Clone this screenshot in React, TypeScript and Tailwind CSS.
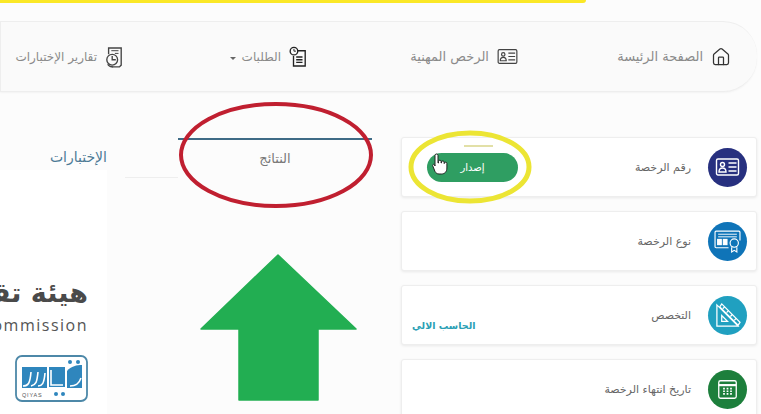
import { House } from 'lucide-react'
import type { ReactNode } from 'react'

function LicenseIcon({ className }: { className?: string }) {
  return (
    <svg viewBox="0 0 24 20" fill="none" stroke="currentColor" strokeWidth="1.4" className={className}>
      <rect x="1" y="2" width="22" height="16" rx="1.5" />
      <circle cx="7" cy="7.5" r="2" />
      <path d="M3.5 15c0-3 1.500-4 3.500-4s3.500 1 3.500 4z" />
      <path d="M13 6h8M13 10h8M13 14h8" />
    </svg>
  )
}

function CertificateIcon({ className }: { className?: string }) {
  return (
    <svg viewBox="0 0 26 22" fill="none" stroke="currentColor" strokeWidth="1.1" className={className}>
      <path d="M14 17H2a1 1 0 0 1-1-1V2a1 1 0 0 1 1-1h22a1 1 0 0 1 1 1v8" />
      <path d="M4 4h18M4 6.500h18" strokeWidth="0.9" />
      <rect x="3.500" y="9" width="3.500" height="5" fill="currentColor" />
      <rect x="9" y="9" width="3.500" height="5" fill="currentColor" />
      <circle cx="19.500" cy="12.500" r="4" />
      <path d="M17 16.500V21l2.500-1.500L22 21v-4.500" />
    </svg>
  )
}

function RulerIcon({ className }: { className?: string }) {
  return (
    <svg viewBox="0 0 28 28" fill="none" stroke="currentColor" strokeWidth="1.3" className={className}>
      <path d="M3 3v22h22z" />
      <path d="M8 14v6h6z" />
      <path d="M8 2l19 19-2 3L6 5z" />
      <path d="M11 5l-2 2M15 9l-2 2M19 13l-2 2M23 17l-2 2" />
    </svg>
  )
}

function CalendarIcon({ className }: { className?: string }) {
  return (
    <svg viewBox="0 0 24 24" fill="none" stroke="currentColor" strokeWidth="1.5" className={className}>
      <rect x="2" y="2" width="20" height="20" rx="2" />
      <path d="M2 7h20" strokeWidth="2.500" />
      <path d="M7 11h2M11 11h2M15 11h2M7 14h2M11 14h2M15 14h2M7 17h2M11 17h2M15 17h2" strokeWidth="1.800" />
    </svg>
  )
}

function OrdersIcon() {
  return (
    <svg viewBox="0 0 20 24" fill="none" stroke="#222" strokeWidth="1.500" className="h-[22px] w-[18px] shrink-0">
      <path d="M8 5h10v17H5V11" />
      <circle cx="5.500" cy="5.500" r="4.200" fill="#fafafa" />
      <path d="M5.500 3v2.500h2.200" strokeWidth="1.100" />
      <path d="M8 12h7M8 15h7M8 18h7" />
    </svg>
  )
}

function ReportIcon() {
  return (
    <svg viewBox="0 0 20 24" fill="none" stroke="#444" strokeWidth="1.500" className="h-[22px] w-[18px] shrink-0">
      <path d="M4 9V2h14v19l-2 2H8" />
      <path d="M7 5h8M11 8h4" strokeWidth="1.100" />
      <circle cx="8" cy="15" r="6" />
      <path d="M8 11v4h4" />
      <path d="M3 20c1 2 3 3 6 3" />
    </svg>
  )
}

function HandCursor({ className }: { className?: string }) {
  return (
    <svg viewBox="0 0 16 22" fill="#fff" stroke="#222" strokeWidth="1" strokeLinejoin="round" className={className}>
      <path d="M3 2.500a1.500 1.500 0 0 1 3 0V10h.5V8.500a1.300 1.300 0 0 1 2.600 0V10h.4V9.200a1.300 1.300 0 0 1 2.600 0v1.300h.2a1.300 1.300 0 0 1 2.600 0V15c0 3.500-2 6-5.500 6H7c-2 0-3-1-4-2.500L.8 13c-.6-1.200.8-2.300 1.600-1.300L3 13z" />
    </svg>
  )
}

function QiyasLogo() {
  return (
    <svg viewBox="0 0 73 47" className="h-[47px] w-[73px]">
      <rect x="1" y="1" width="71" height="45" rx="6" fill="#fff" stroke="#4d88a8" strokeWidth="1.800" />
      <rect x="7" y="12" width="25" height="21" fill="#2f86bd" />
      <rect x="34" y="12" width="16" height="20" fill="#2f86bd" />
      <path d="M52 16c4-5 10-6 15-6v23H52z" fill="#2f86bd" />
      <path d="M8 31c5 0 7-2 8-14M16 31c5-1 6-4 7-14M23 31c4 0 6-2 7-13M36 15l0 15h12M55 31c6 0 9-2 11-8" fill="none" stroke="#fff" strokeWidth="1.600" />
      <circle cx="55" cy="7" r="2" fill="#2f86bd" />
      <circle cx="63" cy="7" r="2" fill="#2f86bd" />
      <circle cx="41" cy="39" r="2" fill="#2f86bd" />
      <circle cx="48" cy="39" r="2" fill="#2f86bd" />
      <text x="7" y="41.500" fontSize="5.500" letterSpacing="0.800" fill="#555" fontFamily="Liberation Sans, sans-serif">QIYAS</text>
    </svg>
  )
}

function NavItem({ icon, label, caret, className, labelClass }: { icon: ReactNode; label: string; caret?: boolean; className: string; labelClass: string }) {
  return (
    <div className={`flex items-center gap-[8px] ${className}`}>
      {icon}
      <span className={`whitespace-nowrap text-[#8a8a8a] ${labelClass}`}>{label}</span>
      {caret && <span className="mt-[3px] -mr-[2px] border-x-[3px] border-t-[3px] border-x-transparent border-t-[#666]" />}
    </div>
  )
}

function InfoCard({ bg, icon, label, children }: { bg: string; icon: ReactNode; label: string; children?: ReactNode }) {
  return (
    <div className="flex h-[60px] shrink-0 items-center rounded-[3px] border border-[#eeeeee] bg-white pr-[9px] pl-[10px] shadow-[0_1px_3px_rgba(0,0,0,0.08)]">
      <div className={`flex h-[39px] w-[39px] shrink-0 items-center justify-center rounded-full text-white ${bg}`}>{icon}</div>
      <span className="mt-[2px] mr-[17px] text-[11px] text-[#666]">{label}</span>
      {children}
    </div>
  )
}

export default function App() {
  return (
    <div dir="ltr" className="relative h-[414px] w-[761px] overflow-hidden bg-[#fcfcfc] [font-family:'DejaVu_Sans',sans-serif]">
      <div className="h-[3px] w-[586px] rounded-br-[8px] bg-[#fbe827]" />

      <nav dir="rtl" className="mt-[18px] flex h-[71px] w-[757px] items-center rounded-r-[34px] border-y border-l border-[#eeeeee] bg-[#fafafa] pr-[26px] shadow-[0_1px_2px_rgba(0,0,0,0.04)]">
        <NavItem className="ml-[101px] w-[112px]" icon={<House className="h-[20px] w-[20px] shrink-0 text-[#333]" strokeWidth={1.500} />} label="الصفحة الرئيسة" labelClass="text-[13px]" />
        <NavItem className="ml-[102px] w-[109px]" icon={<LicenseIcon className="h-[17px] w-[21px] shrink-0 text-[#444]" />} label="الرخص المهنية" labelClass="text-[13px]" />
        <NavItem className="ml-[105px] w-[79px]" icon={<OrdersIcon />} label="الطلبات" labelClass="text-[12px]" caret />
        <NavItem className="w-[110px]" icon={<ReportIcon />} label="تقارير الإختبارات" labelClass="text-[12px]" />
      </nav>

      <div className="mt-[45px] flex">
        <div className="w-[401px] shrink-0">
          <div className="flex h-[41px]">
            <div className="relative flex w-[178px] items-center justify-end pr-[71px]">
              <span className="text-[14px] font-medium whitespace-nowrap text-[#4d7a96]" dir="rtl">الإختبارات</span>
              <div className="absolute right-0 bottom-0 h-px w-[53px] bg-[#eeeeee]" />
            </div>
            <div className="mt-[1px] flex w-[194px] items-center justify-center border-t-2 border-[#3f6b86]">
              <span className="text-[13px] text-[#777]">النتائج</span>
            </div>
          </div>
          <div className="mt-[-8px] flex h-[244px] w-[107px] flex-col items-end overflow-hidden bg-white pr-[19px] pt-[108px]">
            <span dir="rtl" className="text-[27px] leading-[30px] font-bold whitespace-nowrap text-[#4a4a4a]">هيئة تقويم التعليم والتدريب</span>
            <span className="mt-[8px] text-[16px] leading-[18px] tracking-[1.500px] whitespace-nowrap text-[#555] [font-family:'Open_Sans',sans-serif]">Education &amp; Training Evaluation Commission</span>
            <div className="mt-[21px]"><QiyasLogo /></div>
          </div>
        </div>

        <div dir="rtl" className="flex w-[356px] shrink-0 flex-col gap-[14px]">
          <InfoCard bg="bg-[#27307f]" icon={<LicenseIcon className="h-[20px] w-[25px]" />} label="رقم الرخصة">
            <button className="mr-auto ml-[15px] flex h-[29px] w-[91px] items-center justify-center rounded-full bg-[#2f9e62] text-[10px] text-white">إصدار</button>
          </InfoCard>
          <InfoCard bg="bg-[#0f74b8]" icon={<CertificateIcon className="h-[23px] w-[27px]" />} label="نوع الرخصة" />
          <InfoCard bg="bg-[#20a0c0]" icon={<RulerIcon className="h-[27px] w-[27px]" />} label="التخصص">
            <span className="mt-[23px] mr-auto text-[9.500px] font-bold text-[#2b9fb5]">الحاسب الالي</span>
          </InfoCard>
          <InfoCard bg="bg-[#1d7f3c]" icon={<CalendarIcon className="h-[21px] w-[21px]" />} label="تاريخ انتهاء الرخصة" />
        </div>
      </div>

      {/* annotations drawn over the page */}
      <svg viewBox="0 0 761 414" className="pointer-events-none absolute inset-0 h-[414px] w-[761px]">
        <ellipse cx="276" cy="155" rx="95" ry="51" fill="none" stroke="#c01f30" strokeWidth="4" />
        <ellipse cx="470" cy="167" rx="59" ry="34" fill="none" stroke="#ece534" strokeWidth="5" />
        <path d="M464 146h29" stroke="#d8d68a" strokeWidth="1.500" />
        <path d="M278 255L356 329H318V400H239V329H201Z" fill="#22ae52" stroke="#22ae52" strokeWidth="1.500" strokeLinejoin="round" />
      </svg>
      <HandCursor className="absolute top-[153px] left-[432px] h-[22px] w-[16px]" />
    </div>
  )
}
